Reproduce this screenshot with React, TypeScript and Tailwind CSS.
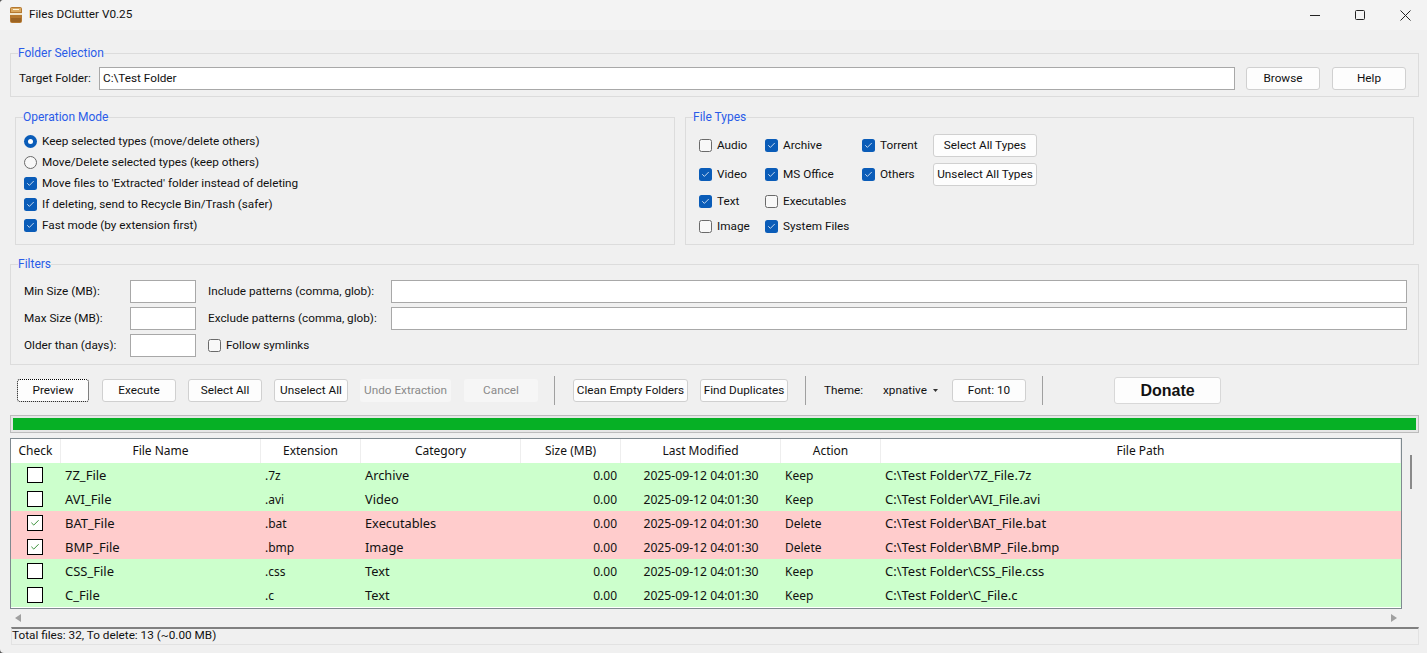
import { Check } from "lucide-react"

const font = "font-['Roboto','Noto_Sans',sans-serif]"
const tableFont = "font-['Noto_Sans','Open_Sans',sans-serif]"

// Win11 style push button
function Btn({ label, className = "" }: { label: string; className?: string }) {
    return (
        <button className={`h-[23px] shrink-0 whitespace-nowrap rounded-[3px] border border-[#d0d0d0] bg-[#fdfdfd] pt-px text-[11.75px] leading-none text-[#111] ${className}`}>
            {label}
        </button>
    )
}

function Box({ checked }: { checked: boolean }) {
    if (checked) {
        return (
            <span className="flex h-[13px] w-[13px] shrink-0 items-center justify-center rounded-[2.5px] bg-[#0a5cb8]">
                <Check className="h-[9px] w-[9px] text-white" strokeWidth={2} />
            </span>
        )
    }
    return <span className="h-[13px] w-[13px] shrink-0 rounded-[2.5px] border border-[#6a6a6a] bg-[#f8f8f8]" />
}

function Radio({ checked }: { checked: boolean }) {
    if (checked) {
        return (
            <span className="flex h-[13px] w-[13px] shrink-0 items-center justify-center rounded-full bg-[#0a5cb8]">
                <span className="h-[5px] w-[5px] rounded-full bg-white" />
            </span>
        )
    }
    return <span className="h-[13px] w-[13px] shrink-0 rounded-full border border-[#6a6a6a] bg-[#f8f8f8]" />
}

function Opt({ checked, label, radio, className = "" }: { checked: boolean; label: string; radio?: boolean; className?: string }) {
    return (
        <div className={`flex h-[13px] items-center gap-[5px] text-[11.75px] leading-none text-[#111] ${className}`}>
            {radio ? <Radio checked={checked} /> : <Box checked={checked} />}
            <span className="whitespace-nowrap pt-px">{label}</span>
        </div>
    )
}

function Group({ title, className = "", children }: { title: string; className?: string; children: React.ReactNode }) {
    return (
        <fieldset className={`min-w-0 border border-[#dcdcdc] ${className}`}>
            <legend className="ml-[7px] h-[14px] px-0 text-[12px] leading-[14px] text-[#2a5ce8]">{title}</legend>
            {children}
        </fieldset>
    )
}

const inputClass = "h-[23px] border border-[#a8a8a8] bg-white"

const columns = [
    { label: "Check", width: "w-[50px]" },
    { label: "File Name", width: "w-[200px]" },
    { label: "Extension", width: "w-[100px]" },
    { label: "Category", width: "w-[160px]" },
    { label: "Size (MB)", width: "w-[100px]" },
    { label: "Last Modified", width: "w-[160px]" },
    { label: "Action", width: "w-[100px]" },
    { label: "File Path", width: "flex-1" },
]

const files = [
    { name: "7Z_File", ext: ".7z", cat: "Archive", del: false },
    { name: "AVI_File", ext: ".avi", cat: "Video", del: false },
    { name: "BAT_File", ext: ".bat", cat: "Executables", del: true },
    { name: "BMP_File", ext: ".bmp", cat: "Image", del: true },
    { name: "CSS_File", ext: ".css", cat: "Text", del: false },
    { name: "C_File", ext: ".c", cat: "Text", del: false },
]

function Row({ f }: { f: (typeof files)[number] }) {
    return (
        <div className={`flex h-[24px] items-center text-[12px] text-[#111] ${f.del ? "bg-[#ffcccc]" : "bg-[#ccffcc]"}`}>
            <div className="flex w-[50px] justify-center pr-[2px]">
                <span className="flex h-4 w-4 items-center justify-center border border-black bg-white">
                    {f.del && <Check className="h-[10px] w-[10px] text-[#0f7a0f]" strokeWidth={2} />}
                </span>
            </div>
            <div className="w-[200px] pl-[4px] pt-[2px] text-[13px]">{f.name}</div>
            <div className="w-[100px] pl-[4px] pt-[2px]">{f.ext}</div>
            <div className="w-[160px] pl-[4px] pt-[2px] text-[12.8px]">{f.cat}</div>
            <div className="w-[100px] pr-[4px] pt-[2px] text-right">0.00</div>
            <div className="w-[160px] pt-[2px] text-center text-[12.2px]">2025-09-12 04:01:30</div>
            <div className="w-[100px] pl-[4px] pt-[2px]">{f.del ? "Delete" : "Keep"}</div>
            <div className="flex-1 pl-[4px] pt-[2px] text-[13px]">{`C:\\Test Folder\\${f.name}${f.ext}`}</div>
        </div>
    )
}

export default function App() {
    return (
        <div className="h-[653px] w-[1427px] bg-[#555]">
            <div className={`flex h-full flex-col overflow-hidden rounded-l-[4px] bg-[#f0f0f0] ${font}`}>
                {/* Title bar */}
                <div className="flex h-[30px] items-center justify-between bg-[#f3f3f3]">
                    <div className="flex items-center gap-[7px] pl-[10px]">
                        <svg width="12" height="16" viewBox="0 0 12 16">
                            <rect x="0" y="0" width="12" height="16" rx="2" fill="#b5782f" />
                            <rect x="1" y="1" width="10" height="4" fill="#d9a860" />
                            <rect x="0" y="6" width="12" height="2" fill="#f0e4c8" />
                            <rect x="3" y="2" width="6" height="1" fill="#fff3d8" />
                            <rect x="1" y="11" width="10" height="4" fill="#9c6424" />
                        </svg>
                        <span className="text-[11.75px] text-[#111]">Files DClutter V0.25</span>
                    </div>
                    <div className="flex items-center gap-[35px] pr-[16px]">
                        <span className="h-px w-[10px] bg-[#222]" />
                        <span className="h-[10px] w-[10px] rounded-[1.5px] border border-[#222]" />
                        <svg width="11" height="11" viewBox="0 0 11 11" stroke="#222" strokeWidth="1">
                            <path d="M0.5 0.5 L10.5 10.5 M10.5 0.5 L0.5 10.5" />
                        </svg>
                    </div>
                </div>

                <div className="flex flex-1 flex-col pl-[10px] pr-[8px] pt-[16px]">
                    {/* Folder selection */}
                    <Group title="Folder Selection" className="h-[51px]">
                        <div className="flex items-center pl-[8px] pr-[12px] pt-[7px]">
                            <span className="w-[80px] pt-px text-[11.75px] leading-none text-[#111]">Target Folder:</span>
                            <div className={`${inputClass} flex-1 pl-[3px] text-[11.75px] leading-[21px] text-[#111]`}>C:\Test Folder</div>
                            <Btn label="Browse" className="ml-[11px] w-[74px]" />
                            <Btn label="Help" className="ml-[12px] w-[74px]" />
                        </div>
                    </Group>

                    <div className="mt-[13px] flex gap-[10px] px-[5px]">
                        <Group title="Operation Mode" className="h-[135px] w-[660px]">
                            <div className="flex flex-col gap-[8px] pl-[8px] pt-[11px]">
                                <Opt radio checked label="Keep selected types (move/delete others)" />
                                <Opt radio checked={false} label="Move/Delete selected types (keep others)" />
                                <Opt checked label="Move files to 'Extracted' folder instead of deleting" />
                                <Opt checked label="If deleting, send to Recycle Bin/Trash (safer)" />
                                <Opt checked label="Fast mode (by extension first)" />
                            </div>
                        </Group>
                        <Group title="File Types" className="h-[135px] flex-1">
                            <div className="flex pl-[13px] pt-[10px]">
                                <div className="flex w-[66px] flex-col pt-[5px]">
                                    <Opt checked={false} label="Audio" />
                                    <Opt checked label="Video" className="mt-[16px]" />
                                    <Opt checked label="Text" className="mt-[14px]" />
                                    <Opt checked={false} label="Image" className="mt-[12px]" />
                                </div>
                                <div className="flex w-[97px] flex-col pt-[5px]">
                                    <Opt checked label="Archive" />
                                    <Opt checked label="MS Office" className="mt-[16px]" />
                                    <Opt checked={false} label="Executables" className="mt-[14px]" />
                                    <Opt checked label="System Files" className="mt-[12px]" />
                                </div>
                                <div className="flex w-[71px] flex-col pt-[5px]">
                                    <Opt checked label="Torrent" />
                                    <Opt checked label="Others" className="mt-[16px]" />
                                </div>
                                <div className="flex flex-col gap-[6px]">
                                    <Btn label="Select All Types" className="w-[104px]" />
                                    <Btn label="Unselect All Types" className="w-[104px]" />
                                </div>
                            </div>
                        </Group>
                    </div>

                    {/* Filters */}
                    <Group title="Filters" className="mt-[12px] h-[108px]">
                        <div className="grid grid-cols-[106px_66px_12px_183px_1fr] items-center gap-y-[4px] pl-[13px] pr-[11px] pt-[9px] text-[11.75px] leading-none text-[#111]">
                            <span className="pt-px">Min Size (MB):</span>
                            <div className={inputClass} />
                            <span />
                            <span className="pt-px">Include patterns (comma, glob):</span>
                            <div className={inputClass} />
                            <span className="pt-px">Max Size (MB):</span>
                            <div className={inputClass} />
                            <span />
                            <span className="pt-px">Exclude patterns (comma, glob):</span>
                            <div className={inputClass} />
                            <span className="pt-px">Older than (days):</span>
                            <div className={inputClass} />
                            <span />
                            <Opt checked={false} label="Follow symlinks" />
                        </div>
                    </Group>

                    {/* Toolbar */}
                    <div className="mt-[12px] flex h-[27px] items-center pl-[7px] text-[11.75px] text-[#111]">
                        <button className="h-[23px] w-[72px] rounded-[3px] border border-dotted border-black bg-[#fdfdfd] pt-px text-[11.75px] leading-none">
                            Preview
                        </button>
                        <Btn label="Execute" className="ml-[13px] w-[74px]" />
                        <Btn label="Select All" className="ml-[12px] w-[74px]" />
                        <Btn label="Unselect All" className="ml-[12px] w-[74px]" />
                        <button className="ml-[12px] h-[23px] w-[91px] whitespace-nowrap rounded-[3px] bg-[#f6f6f6] pt-px text-[11.75px] leading-none text-[#8a8a8a]">Undo Extraction</button>
                        <button className="ml-[13px] h-[23px] w-[74px] rounded-[3px] bg-[#f6f6f6] pt-px text-[11.75px] leading-none text-[#8a8a8a]">Cancel</button>
                        <span className="ml-[16px] h-[29px] w-px bg-[#a0a0a0]" />
                        <Btn label="Clean Empty Folders" className="ml-[18px] w-[115px]" />
                        <Btn label="Find Duplicates" className="ml-[12px] w-[88px]" />
                        <span className="ml-[17px] h-[29px] w-px bg-[#a0a0a0]" />
                        <span className="ml-[18px] w-[59px]">Theme:</span>
                        <span className="flex w-[69px] items-center">
                            xpnative
                            <svg className="ml-[6px]" width="5" height="3" viewBox="0 0 5 3"><path d="M0 0 H5 L2.5 3 Z" fill="#333" /></svg>
                        </span>
                        <Btn label="Font: 10" className="w-[74px]" />
                        <span className="ml-[16px] h-[29px] w-px bg-[#a0a0a0]" />
                        <button className="ml-[71px] h-[27px] w-[107px] rounded-[3px] border border-[#d8d8d8] bg-[#fdfdfd] font-['Liberation_Sans',sans-serif] text-[16px] font-bold leading-none text-[#111]">
                            Donate
                        </button>
                    </div>

                    {/* Progress */}
                    <div className="mt-[11px] h-[18px] border border-[#bcbcbc] bg-[#e6e6e6] p-[2px]">
                        <div className="h-full bg-[#06b025]" />
                    </div>

                    {/* Table */}
                    <div className={`mt-[5px] flex ${tableFont}`}>
                        <div className="h-[171px] w-[1392px] overflow-hidden border border-[#7f8a90] bg-white">
                            <div className="flex h-[24px] items-center text-[12px] text-[#111]">
                                {columns.map((c) => (
                                    <div key={c.label} className={`${c.width} h-full border-r border-[#eeeeee] text-center leading-[24px]`}>{c.label}</div>
                                ))}
                            </div>
                            {files.map((f) => (
                                <Row key={f.name} f={f} />
                            ))}
                        </div>
                        <div className="ml-[8px] mt-[17px] h-[34px] w-[2px] bg-[#8a8a8a]" />
                    </div>

                    {/* Horizontal scroll arrows */}
                    <div className="flex h-[18px] w-[1392px] items-center justify-between px-[5px]">
                        <svg width="6" height="8" viewBox="0 0 6 8"><path d="M6 0 V8 L0 4 Z" fill="#a0a0a0" /></svg>
                        <svg width="6" height="8" viewBox="0 0 6 8"><path d="M0 0 V8 L6 4 Z" fill="#a0a0a0" /></svg>
                    </div>

                    {/* Status bar */}
                    <div className="ml-px h-[18px] border border-[#e2e2e2] border-t-2 border-t-[#808080] text-[11.75px] leading-[13px] text-[#111]">
                        Total files: 32, To delete: 13 (~0.00 MB)
                    </div>
                </div>
            </div>
        </div>
    )
}
